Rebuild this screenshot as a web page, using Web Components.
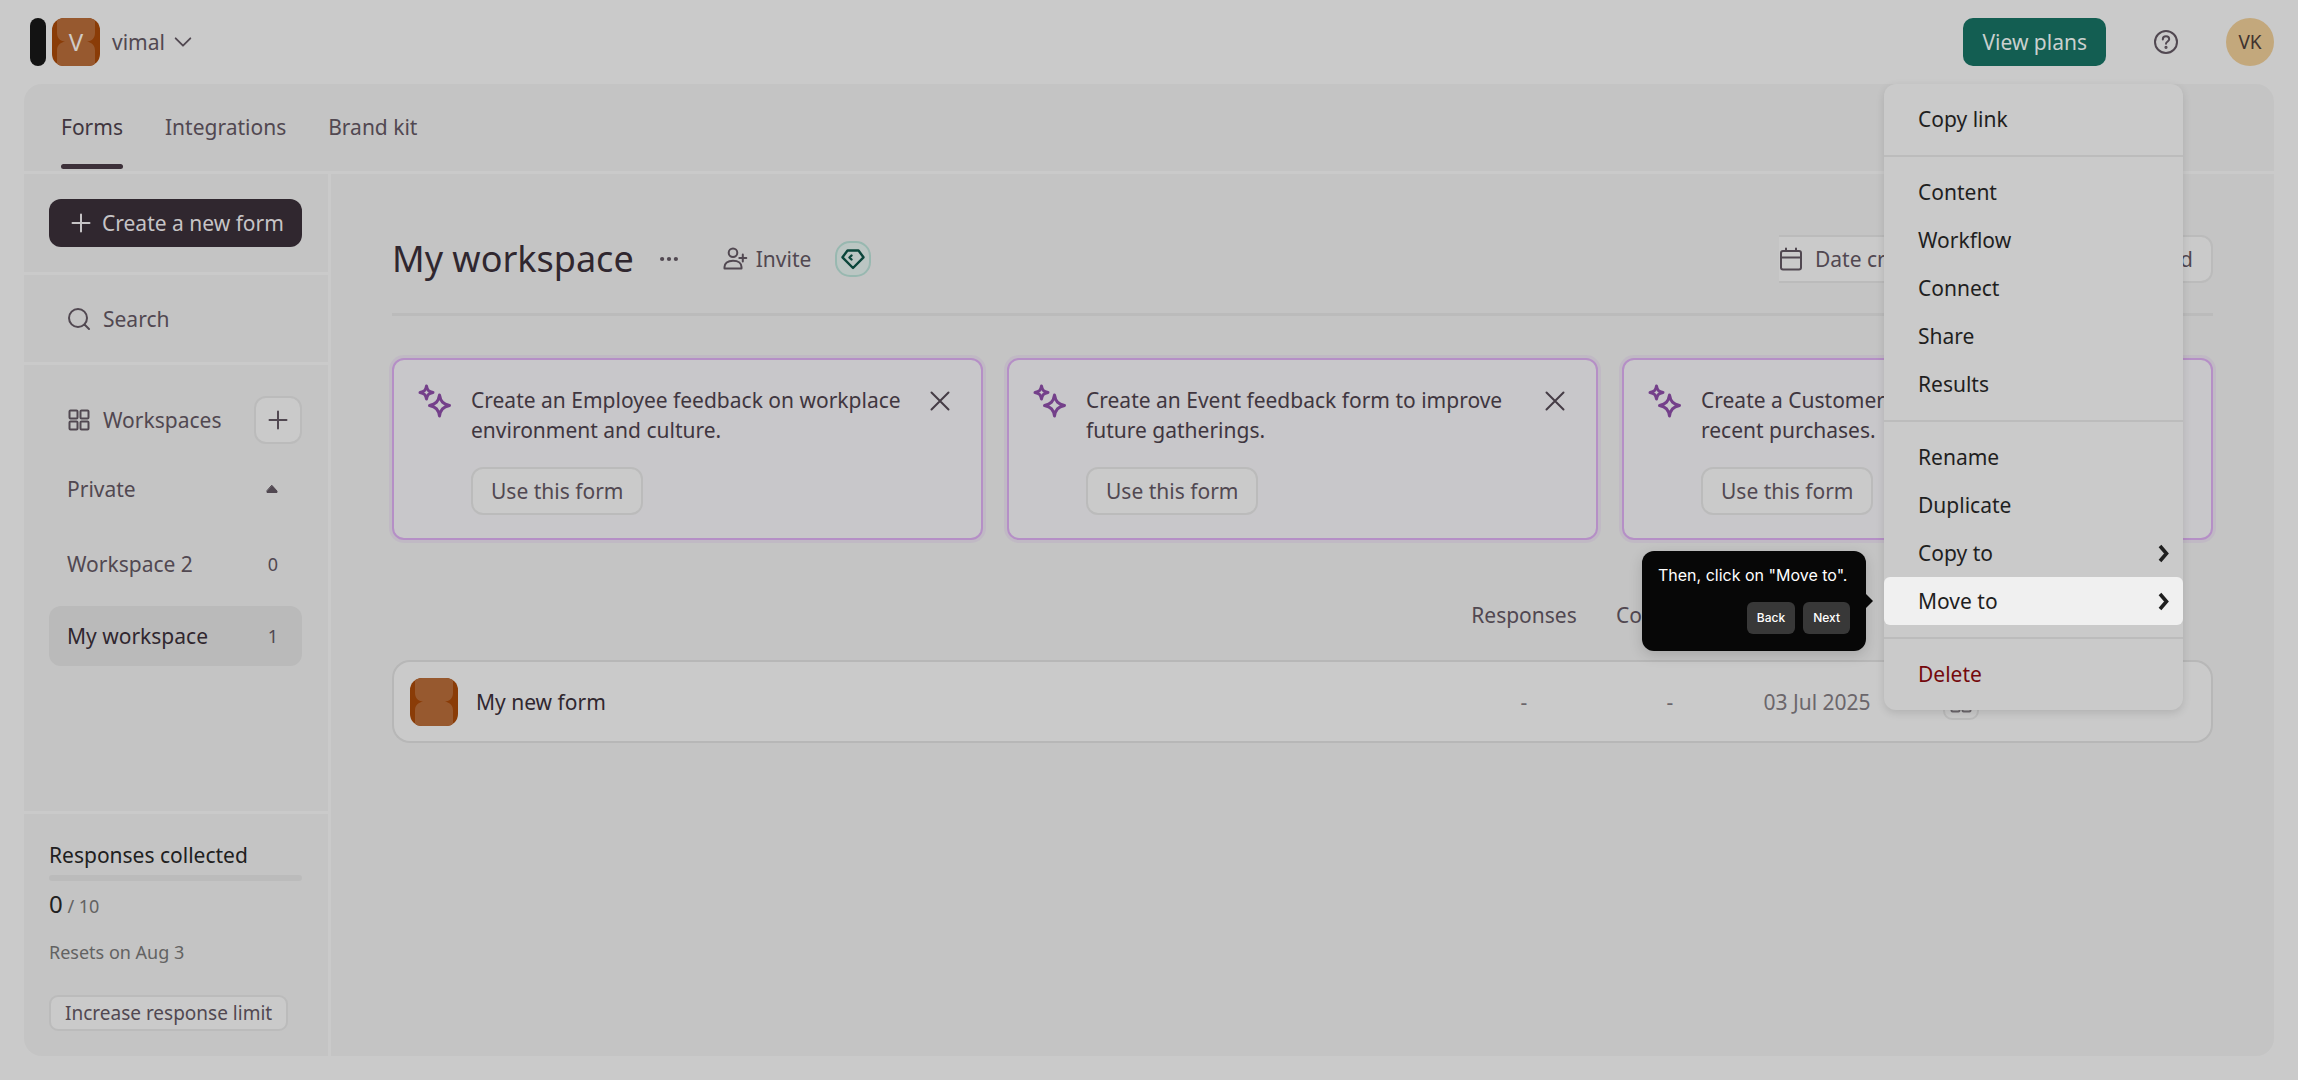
<!DOCTYPE html>
<html lang="en">
<head>
<meta charset="utf-8">
<title>My workspace</title>
<style>
  html, body { height: 100%; }
  body {
    margin: 0;
    font: 21px/30px "Noto Sans", sans-serif;
    color: #514851;
    background: #cacaca;
    --page: #cacaca;
    --panel: #c4c4c4;
    --soft-line: #bbbbbb;
    --ink: #30272f;
    --text: #514851;
  }
</style>
</head>
<body>
<workspace-app></workspace-app>
<script>
const define = (name, html, setup) => {
  const tpl = document.createElement('template');
  tpl.innerHTML = `<style>
    *, *::before { box-sizing: border-box; }
    button, select, input, a { font: inherit; color: inherit; text-decoration: none; }
    button { background: none; border: 0; padding: 0; cursor: pointer; white-space: nowrap; }
  </style>` + html;
  customElements.define(name, class extends HTMLElement {
    connectedCallback() {
      if (this.shadowRoot) return;
      this.attachShadow({ mode: 'open' }).append(tpl.content.cloneNode(true));
      if (setup) setup(this, this.shadowRoot);
    }
  });
};

const icons = {
  plus: [24, '<path d="M12 3.500v17M3.500 12h17"/>'],
  chevron: [24, '<path d="M4 8l8 8 8-8"/>'],
  search: [24, '<circle cx="11" cy="11" r="9"/><path d="M17.500 17.500l4.500 4.500"/>'],
  grid: [24, '<g stroke-width="2"><rect x="2.500" y="2.500" width="8" height="8" rx="1"/><rect x="13.500" y="2.500" width="8" height="8" rx="1"/><rect x="2.500" y="13.500" width="8" height="8" rx="1"/><rect x="13.500" y="13.500" width="8" height="8" rx="1"/></g>'],
  caret: [24, '<path d="M12 8.500l5 5.500v1.500h-10v-1.500z" fill="currentColor" stroke-width="1"/>'],
  dots: [24, '<g fill="currentColor" stroke="none"><circle cx="4.500" cy="12" r="2.300"/><circle cx="12" cy="12" r="2.300"/><circle cx="19.500" cy="12" r="2.300"/></g>'],
  invite: [24, '<circle cx="10" cy="5.700" r="4.300"/><path d="M1.500 21.500v-1.500c0-3.500 3-6.300 8.500-6.300s8.500 2.800 8.500 6.300v1.500z"/><path d="M19.800 7.500v7M16.300 11h7"/>'],
  diamond: [24, '<path d="M6.500 3.500h11l5 6.800L12 21 1.500 10.300z"/><path d="M10.500 8.500l-2 2 2 2"/>'],
  calendar: [24, '<rect x="2" y="4" width="20" height="18.500" rx="2"/><path d="M2 10.500h20M7 1.500v2.500M17 1.500v2.500"/>'],
  close: [24, '<path d="M3.500 3.500l17 17M20.500 3.500l-17 17"/>'],
  help: [24, '<circle cx="12" cy="12" r="11"/><path d="M8.800 9.500c0-2 1.400-3.200 3.200-3.200s3.200 1.200 3.200 3c0 2-3.200 2.300-3.200 4.500"/><circle cx="12" cy="17.300" r=".6" fill="currentColor"/>'],
  arrow: [24, '<path d="M8 5l6.500 7.500L8 20" stroke-width="3.600" stroke-linecap="butt" stroke-linejoin="miter"/>'],
  sparkle: [36, '<path d="M9.500 3v0c.8 4.400 2 5.600 6.500 6.500-4.500.9-5.700 2.100-6.500 6.500-.8-4.400-2-5.600-6.500-6.500 4.500-.9 5.700-2.100 6.500-6.500zM22.500 12c1.100 6.500 3.500 9 10 10.500-6.500 1.500-8.900 4-10 10.500-1.100-6.500-3.500-9-10-10.500 6.500-1.500 8.900-4 10-10.500z" stroke-linejoin="round" stroke-width="3"/>']
};
define('ui-icon', `<style>
    :host { display: block; flex: none; width: var(--size, 24px); height: var(--size, 24px); }
    svg { display: block; width: 100%; height: 100%; fill: none; stroke: currentColor; stroke-width: var(--stroke, 2); stroke-linecap: round; stroke-linejoin: round; overflow: visible; }
  </style><svg aria-hidden="true"></svg>`, (el, root) => {
    const [size, body] = icons[el.getAttribute('name')];
    const svg = root.querySelector('svg');
    svg.setAttribute('viewBox', `0 0 ${size} ${size}`);
    svg.innerHTML = body;
  });

define('brand-tile', `<style>
    :host { display: grid; flex: none; width: 48px; height: 48px; border-radius: 12px; overflow: hidden; }
    svg, span { grid-area: 1 / 1; }
    span { place-self: center; color: #d0cbc6; font-size: 24px; }
  </style>
  <svg viewBox="0 0 48 48" aria-hidden="true"><rect width="48" height="48" fill="#8a3c07"/>
    <path d="M5 0h38v15c0 5-3 8-8 8.700 5 .7 8 3.700 8 8.700v16H5v-16c0-5 3-8 8-8.700-5-.7-8-3.700-8-8.700z" fill="#97592f"/></svg>
  <span><slot></slot></span>`);

define('app-header', `<style>
    :host { display: flex; align-items: center; height: 84px; padding: 0 24px 0 30px; flex: none; }
    .mark { width: 16px; height: 48px; border-radius: 8px; background: #131313; margin-right: 6px; }
    .account { display: flex; align-items: center; gap: 12px; }
    .account ui-icon { --size: 22px; margin-left: -5px; }
    .actions { display: flex; align-items: center; gap: 36px; margin-left: auto; }
    .plans { height: 48px; padding: 0 19px; border-radius: 10px; background: #135e52; color: #c9d0ce; }
    .help { display: grid; place-items: center; width: 48px; height: 48px; }
    .avatar { width: 48px; height: 48px; border-radius: 50%; background: #c3a87c; color: #40332f; font-size: 19px; }
  </style>
  <span class="mark"></span>
  <button class="account"><brand-tile>V</brand-tile><span>vimal</span><ui-icon name="chevron"></ui-icon></button>
  <div class="actions">
    <button class="plans">View plans</button>
    <button class="help" aria-label="Help"><ui-icon name="help"></ui-icon></button>
    <button class="avatar">VK</button>
  </div>`);

define('tab-bar', `<style>
    :host { display: block; border-bottom: 3px solid var(--page); flex: none; }
    nav { display: flex; gap: 42px; padding: 0 37px 1px; height: 87px; }
    a { display: flex; align-items: center; position: relative; }
    a[aria-current] { color: #40363f; }
    a[aria-current]::before { content: ""; position: absolute; left: 0; right: 0; bottom: 1px; height: 5px; border-radius: 3px; background: #3c3039; }
  </style>
  <nav><a href="#forms" aria-current="page">Forms</a><a href="#integrations">Integrations</a><a href="#brand">Brand kit</a></nav>`);

define('side-row', `<style>
    :host { display: block; border-radius: 12px; }
    :host([active]) { background: #bababa; color: var(--ink); }
    a { display: flex; align-items: center; justify-content: space-between; height: 60px; padding: 0 24px 0 18px; }
    small { font-size: 18px; color: var(--text); }
  </style><a href="#workspace"><slot></slot><small></small></a>`,
  (el, root) => { root.querySelector('small').textContent = el.getAttribute('count'); });

define('side-bar', `<style>
    :host { display: flex; flex-direction: column; width: 307px; flex: none; border-right: 3px solid var(--page); }
    section { padding: 25px 26px 25px 25px; border-bottom: 3px solid var(--page); }
    .create { display: flex; align-items: center; gap: 9px; width: 100%; height: 48px; padding: 0 20px; border-radius: 12px; background: #30272f; color: #c6c4c6; }
    .search, .title { display: flex; align-items: center; gap: 12px; padding-left: 18px; }
    .search { height: 37px; cursor: text; }
    .search input { border: 0; padding: 0; background: none; width: 100%; height: 30px; outline: 0; }
    .search input::placeholder { color: var(--text); opacity: 1; }
    .spaces { flex: 1; border: 0; padding-top: 31px; }
    .add { display: grid; place-items: center; width: 48px; height: 48px; margin-left: auto; border: 2px solid var(--soft-line); border-radius: 12px; background: var(--page); }
    .group { display: flex; align-items: center; justify-content: space-between; width: 100%; height: 48px; padding: 0 18px; margin: 21px 0; }
    .list { display: grid; gap: 12px; }
    .usage { border-top: 3px solid var(--page); border-bottom: 0; padding-top: 26px; }
    .usage h2 { margin: 0; font-size: 21px; font-weight: 400; color: #202020; }
    .bar { height: 6px; margin-top: 5px; border-radius: 3px; background: var(--soft-line); }
    .usage p { margin: 8px 0 0; font-size: 18px; color: #626262; }
    .usage p b { font-weight: 400; font-size: 24px; color: #202020; }
    .usage .reset { margin-top: 16px; }
    .limit { height: 36px; margin-top: 28px; padding: 0 14px; border: 2px solid var(--soft-line); border-radius: 9px; background: var(--page); font-size: 19px; line-height: 30px; }
  </style>
  <section><button class="create"><ui-icon name="plus"></ui-icon>Create a new form</button></section>
  <section><label class="search"><ui-icon name="search"></ui-icon><input type="text" placeholder="Search" aria-label="Search"></label></section>
  <section class="spaces">
    <div class="title"><ui-icon name="grid"></ui-icon><span>Workspaces</span><button class="add" aria-label="Add workspace"><ui-icon name="plus"></ui-icon></button></div>
    <button class="group"><span>Private</span><ui-icon name="caret"></ui-icon></button>
    <div class="list"><side-row count="0">Workspace 2</side-row><side-row count="1" active>My workspace</side-row></div>
  </section>
  <section class="usage">
    <h2>Responses collected</h2>
    <div class="bar"></div>
    <p><b>0</b> / 10</p>
    <p class="reset">Resets on Aug 3</p>
    <button class="limit">Increase response limit</button>
  </section>`);

define('page-title', `<style>
    :host { display: flex; align-items: center; height: 120px; padding-top: 9px; border-bottom: 3px solid var(--soft-line); }
    h1 { margin: 0 24px 0 0; font-size: 36px; line-height: 48px; font-weight: 400; color: var(--ink); }
    .more { --size: 22px; margin-right: 43px; }
    .invite { display: flex; align-items: center; gap: 9px; margin-right: 24px; }
    .gem { display: grid; place-items: center; width: 36px; height: 36px; border: 2px solid #98b8b0; border-radius: 15px; background: #bbc6c3; color: #0b463b; --stroke: 2.4; }
    .view { display: flex; gap: 12px; margin-left: auto; }
    .sort, .mode { display: flex; align-items: center; height: 48px; border: 2px solid var(--soft-line); border-radius: 12px; background: var(--page); }
    .sort { width: 240px; border-left: 0; border-top-left-radius: 0; border-bottom-left-radius: 0; padding: 0 18px 0 0; gap: 12px; }
    .sort ui-icon:last-child { --size: 22px; }
    select { flex: 1; appearance: none; border: 0; padding: 0; background: none; outline: 0; }
    .mode { width: 182px; }
    .mode button { height: 44px; padding: 0 18px; }
    .mode button:first-child { flex: 1; }
    .mode button + button { border-left: 2px solid var(--soft-line); }
  </style>
  <h1>My workspace</h1>
  <button class="more" aria-label="More"><ui-icon name="dots"></ui-icon></button>
  <button class="invite"><ui-icon name="invite"></ui-icon>Invite</button>
  <span class="gem"><ui-icon name="diamond"></ui-icon></span>
  <div class="view">
    <label class="sort"><ui-icon name="calendar"></ui-icon><select aria-label="Sort by"><option>Date created</option></select><ui-icon name="chevron"></ui-icon></label>
    <div class="mode"><button aria-label="List"></button><button>Grid</button></div>
  </div>`);

define('template-card', `<style>
    :host { display: flex; align-items: flex-start; padding: 23px 29px 23px 23px; border: 2px solid #b58fc6; border-radius: 12px; background: #c8c7ca; box-shadow: 0 0 0 3px rgba(181,143,198,.2); color: #40363f; }
    .spark { --size: 36px; color: #74408a; margin-right: 18px; }
    .body { flex: 1; display: flex; flex-direction: column; align-items: flex-start; padding-top: 2px; }
    .use { height: 48px; margin-top: 22px; padding: 0 18px; border: 2px solid var(--soft-line); border-radius: 12px; background: var(--page); color: var(--text); }
    .close { margin-top: 6px; color: #453c45; }
    .text { max-width: 440px; }
  </style>
  <ui-icon class="spark" name="sparkle"></ui-icon>
  <div class="body"><div class="text"><slot></slot></div><button class="use">Use this form</button></div>
  <button class="close" aria-label="Dismiss"><ui-icon name="close"></ui-icon></button>`);

define('form-table', `<style>
    :host { display: block; }
    table { width: 100%; border-collapse: separate; border-spacing: 0; table-layout: fixed; }
    th { height: 90px; padding: 0; font-weight: 400; text-align: center; }
    td { height: 83px; padding: 0; text-align: center; border: solid #b7b7b7; border-width: 2px 0; background: var(--page); color: #6b666b; }
    td:first-child { border-left-width: 2px; border-radius: 18px 0 0 18px; }
    td:last-child { border-right-width: 2px; border-radius: 0 18px 18px 0; }
    .name { display: flex; align-items: center; gap: 18px; padding-left: 16px; color: var(--ink); }
    .num { width: 146px; } .date { width: 148px; } .int { width: 140px; } .end { width: 182px; }
    .apps { display: inline-grid; place-items: center; vertical-align: middle; width: 36px; height: 36px; border: 2px solid var(--soft-line); border-radius: 9px; }
  </style>
  <table>
    <thead><tr><th aria-label="Name"></th><th class="num">Responses</th><th class="num">Completed</th><th class="date" aria-label="Updated"></th><th class="int" aria-label="Integrations"></th><th class="end"></th></tr></thead>
    <tbody><tr><td><div class="name"><brand-tile></brand-tile>My new form</div></td><td>-</td><td>-</td><td>03 Jul 2025</td>
      <td><button class="apps" aria-label="Add integration"><ui-icon name="grid"></ui-icon></button></td><td></td></tr></tbody>
  </table>`);

define('menu-item', `<style>
    :host { display: block; position: relative; }
    button { display: flex; align-items: center; justify-content: space-between; width: 100%; height: 48px; padding: 0 7px 0 34px; text-align: left; color: #1f1f1f; }
    :host([danger]) button { color: #74080c; }
    :host([active]) button { background: #f0f0f0; border-radius: 6px; }
    ui-icon { display: none; }
    :host([submenu]) ui-icon { display: block; }
  </style><button><slot></slot><ui-icon name="arrow"></ui-icon></button><slot name="tip"></slot>`);

define('tour-tip', `<style>
    :host { position: absolute; right: calc(100% + 18px); top: -26px; box-sizing: border-box; display: flex; flex-direction: column; gap: 15px; width: 224px; height: 100px; padding: 12px 16px; border-radius: 12px; background: #070707; color: #fff; font: 16px/24px Inter, sans-serif; box-shadow: 0 4px 14px rgba(0,0,0,.15); }
    :host::after { content: ""; position: absolute; left: 100%; top: 43px; border: solid transparent; border-width: 7px 0 7px 7px; border-left-color: #070707; }
    p { margin: 0; white-space: nowrap; }
    div { display: flex; gap: 8px; justify-content: flex-end; }
    div button { height: 32px; padding: 0 10px; border-radius: 6px; background: #383838; font-size: 12px; font-weight: 500; }
  </style><p><slot></slot></p><div><button>Back</button><button>Next</button></div>`);

define('context-menu', `<style>
    :host { position: absolute; top: 0; right: 91px; width: 299px; padding: 11px 0 12px; border-radius: 12px; background: var(--page); box-shadow: 0 3px 8px rgba(0,0,0,.12); }
    hr { height: 2px; margin: 12px 0 11px; border: 0; background: #bcbcbc; }
  </style>
  <menu-item>Copy link</menu-item><hr>
  <menu-item>Content</menu-item><menu-item>Workflow</menu-item><menu-item>Connect</menu-item><menu-item>Share</menu-item><menu-item>Results</menu-item><hr>
  <menu-item>Rename</menu-item><menu-item>Duplicate</menu-item><menu-item submenu>Copy to</menu-item>
  <menu-item submenu active>Move to<tour-tip slot="tip">Then, click on "Move to".</tour-tip></menu-item><hr>
  <menu-item danger>Delete</menu-item>`);

define('workspace-app', `<style>
    :host { display: flex; flex-direction: column; min-height: 100vh; }
    .panel { position: relative; flex: 1; display: flex; flex-direction: column; margin: 0 24px 24px; border-radius: 18px; background: var(--panel); }
    .columns { flex: 1; display: flex; }
    main { flex: 1; min-width: 0; padding: 22px 61px; }
    .cards { display: grid; grid-template-columns: repeat(3, 1fr); gap: 24px; margin-top: 42px; margin-bottom: 30px; }
  </style>
  <app-header></app-header>
  <div class="panel">
    <tab-bar></tab-bar>
    <div class="columns">
      <side-bar></side-bar>
      <main>
        <page-title></page-title>
        <div class="cards">
          <template-card>Create an Employee feedback on workplace environment and culture.</template-card>
          <template-card>Create an Event feedback form to improve future gatherings.</template-card>
          <template-card>Create a Customer feedback form about recent purchases.</template-card>
        </div>
        <form-table></form-table>
      </main>
    </div>
    <context-menu></context-menu>
  </div>`);
</script>
</body>
</html>
